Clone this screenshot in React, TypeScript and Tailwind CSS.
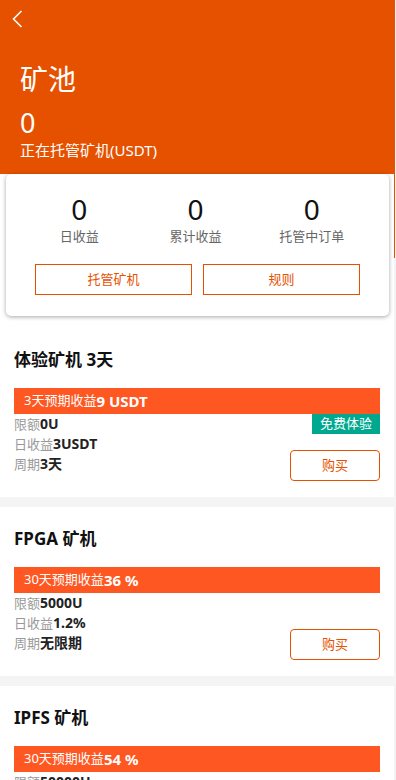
import React from 'react';

interface Machine {
  title: string;
  prefix: string;
  yieldText: string;
  limit: string;
  daily: string;
  period: string;
  free?: boolean;
}

const machines: Machine[] = [
  { title: '体验矿机 3天', prefix: '3天预期收益', yieldText: '9 USDT', limit: '0U', daily: '3USDT', period: '3天', free: true },
  { title: 'FPGA 矿机', prefix: '30天预期收益', yieldText: '36 %', limit: '5000U', daily: '1.2%', period: '无限期' },
  { title: 'IPFS 矿机', prefix: '30天预期收益', yieldText: '54 %', limit: '50000U', daily: '1.8%', period: '无限期' },
];

const font = { fontFamily: '"Noto Sans", "Noto Sans CJK SC", sans-serif' };

function MachineCard({ m }: { m: Machine }) {
  return (
    <div className="bg-white px-[14px] pt-[20px] pb-[16px]">
      <h2 className="text-[17px] leading-[24px] font-bold text-[#111]">{m.title}</h2>
      <div className="mt-[16px] h-[26px] bg-[#FF5722] pl-[10px] flex items-center text-white">
        <span className="text-[13px]">{m.prefix}</span>
        <span className="text-[15px] font-bold">{m.yieldText}</span>
      </div>
      <div className="relative flex justify-between">
        {m.free && (
          <div className="absolute right-0 top-0 w-[68px] h-[20px] bg-[#00A88F] text-white text-[13px] flex items-center justify-center">
            免费体验
          </div>
        )}
        <div className="pb-[7px]">
          {[
            ['限额', m.limit],
            ['日收益', m.daily],
            ['周期', m.period],
          ].map(([k, v]) => (
            <div key={k} className="leading-[19px] flex items-baseline">
              <span className="text-[13px] text-[#999]">{k}</span>
              <span className="text-[14px] font-bold text-[#222]">{v}</span>
            </div>
          ))}
        </div>
        <div className="flex flex-col justify-end">
          <button className="w-[90px] h-[31px] rounded-[4px] border border-[#E65100] text-[#E65100] text-[13px] bg-white">
            购买
          </button>
        </div>
      </div>
    </div>
  );
}

export default function App() {
  return (
    <div className="min-h-screen bg-[#f4f4f4]" style={font}>
      {/* Header */}
      <div className="h-[258px] w-[395px] bg-[#E65100] text-white">
        <div className="pt-[10px] pl-[12px] h-[28px] box-content">
          <svg width="11" height="18" viewBox="0 0 11 18" fill="none">
            <polyline points="9.5,1 1.5,9 9.5,17" stroke="white" strokeWidth="1.6" />
          </svg>
        </div>
        <div className="px-[20px] pt-[23px]">
          <div className="text-[28px] leading-[36px]">矿池</div>
          <div className="mt-[10px] text-[27px] leading-[32px]">0</div>
          <div className="mt-px text-[15px] leading-[20px]">正在托管矿机(USDT)</div>
        </div>
      </div>

      <div className="w-[394px] bg-white">
        {/* Summary card */}
        <div className="relative -mt-[84px] mx-[6px] w-[383px] bg-white rounded-[5px] shadow-[0_1px_4px_rgba(0,0,0,0.35)] pt-[19px] pb-[21px]">
          <div className="grid grid-cols-3 pl-[15px] pr-[19px]">
            {[
              ['0', '日收益'],
              ['0', '累计收益'],
              ['0', '托管中订单'],
            ].map(([v, k]) => (
              <div key={k} className="flex flex-col items-center">
                <div className="text-[28px] leading-[32px] text-[#111]">{v}</div>
                <div className="mt-[2px] text-[13px] leading-[18px] text-[#666]">{k}</div>
              </div>
            ))}
          </div>
          <div className="mt-[19px] flex justify-center gap-[11px]">
            <button className="w-[157px] h-[31px] border border-[#E65100] text-[#E65100] text-[13px]">托管矿机</button>
            <button className="w-[157px] h-[31px] border border-[#E65100] text-[#E65100] text-[13px]">规则</button>
          </div>
        </div>
        <div className="h-[12px]" />
      </div>

      <div className="w-[394px] flex flex-col gap-[10px]">
        {machines.map((m) => (
          <MachineCard key={m.title} m={m} />
        ))}
      </div>
    </div>
  );
}
